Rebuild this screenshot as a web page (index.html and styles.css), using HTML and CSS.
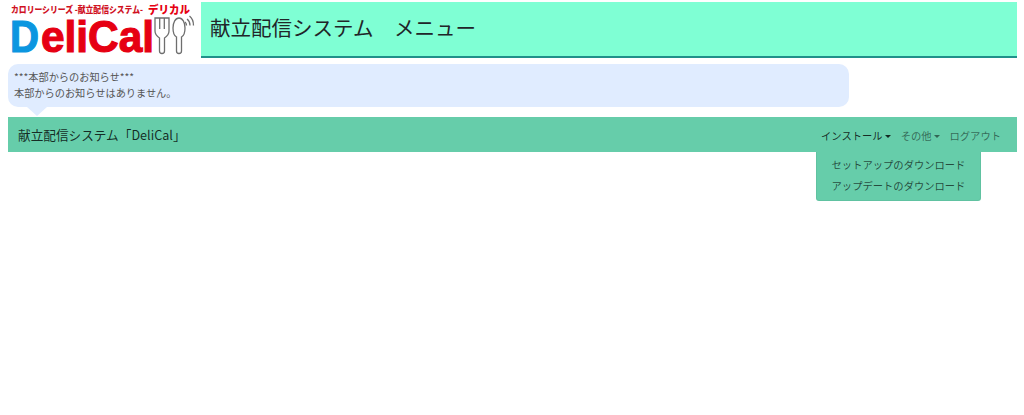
FILE: index.html
```html
<!DOCTYPE html>
<html lang="ja">

<head>
    <meta charset="UTF-8">
    <meta name="viewport" content="width=device-width, initial-scale=1.0">
    <title>献立配信システム</title>
    <link rel="stylesheet" href="styles.css">
</head>

<body>
    <!-- header -->
    <div class="header">
        <div class="logo">
            <svg width="193" height="54" viewBox="0 0 193 54">
                <text class="logo_sub" x="3" y="10" textLength="132" lengthAdjust="spacingAndGlyphs">カロリーシリーズ -献立配信システム-</text>
                <text class="logo_kana" x="140" y="11" textLength="42" lengthAdjust="spacingAndGlyphs">デリカル</text>
                <text class="logo_d" x="2" y="49" textLength="29" lengthAdjust="spacingAndGlyphs">D</text>
                <text class="logo_name" x="33" y="49" textLength="113" lengthAdjust="spacingAndGlyphs">eliCal</text>
                <!-- fork -->
                <path class="logo_line" d="M147 15v13c0 4 3 6 4.500 7v13a2.500 2.500 0 0 0 5 0V35c1.500-1 4.500-3 4.500-7V15z" />
                <path class="logo_wave" d="M151.700 15v11M156.300 15v11" />
                <!-- spoon -->
                <path class="logo_line" d="M171 15c-3.500 0-6 4.500-6 10 0 4 1.500 8 3.500 9v14a2.500 2.500 0 0 0 5 0V34c2-1 3.500-5 3.500-9 0-5.500-2.500-10-6-10z" />
                <!-- signal -->
                <path class="logo_wave" d="M177 19c1 .8 1.500 2 1.500 3.500M179 16c2 1.500 3 4 3 6.500M181.500 13c2.500 2 4 5.500 4 9.500" />
            </svg>
        </div>
        <h1 class="title">献立配信システム　メニュー</h1>
    </div>

    <!-- notice -->
    <div class="notice">
        <p>***本部からのお知らせ***</p>
        <p>本部からのお知らせはありません。</p>
    </div>

    <!-- nav -->
    <nav class="navbar">
        <a class="brand" href="#">献立配信システム「DeliCal」</a>
        <ul class="nav_list">
            <li class="nav_item"><a class="nav_link active caret" href="#">インストール</a></li>
            <li class="nav_item"><a class="nav_link caret" href="#">その他</a></li>
            <li class="nav_item"><a class="nav_link" href="#">ログアウト</a></li>
        </ul>
    </nav>
    <div class="sub_menu">
        <a href="#">セットアップのダウンロード</a>
        <a href="#">アップデートのダウンロード</a>
    </div>
</body>

</html>
```

FILE: styles.css
```css
* {
    box-sizing: border-box;
}

body {
    margin: 0;
    padding: 2px 7px 0 8px;
    background: #fff;
    font-family: "Noto Sans CJK JP", "Noto Sans", sans-serif;
    font-size: 12px;
    color: #212529;
}

.header {
    display: flex;
    height: 56px;
}

.logo {
    width: 193px;
    flex-shrink: 0;
    padding-top: 1px;
}

.logo svg {
    display: block;
}

.logo_sub,
.logo_kana {
    font-family: "Noto Sans CJK JP", sans-serif;
    font-weight: 900;
}

.logo_sub {
    font-size: 9px;
    fill: #d0121f;
}

.logo_kana {
    font-size: 11px;
    fill: #e60012;
}

.logo_d,
.logo_name {
    font-family: "Liberation Sans", sans-serif;
    font-weight: bold;
    font-size: 44px;
    stroke-width: 1.2;
}

.logo_d {
    fill: #0b96e0;
    stroke: #0b96e0;
}

.logo_name {
    fill: #e60012;
    stroke: #e60012;
}

.logo_line {
    fill: #fff;
    stroke: #6e6e6e;
    stroke-width: 1.3;
}

.logo_wave {
    fill: none;
    stroke: #6e6e6e;
    stroke-width: 1.3;
}

.title {
    flex: 1;
    margin: 0;
    padding: 0 0 4px 9px;
    display: flex;
    align-items: center;
    background: #7fffd4;
    border-bottom: 2px solid #20908a;
    font-size: 20.5px;
    font-weight: 400;
    color: #212529;
}

.notice {
    position: relative;
    width: 841px;
    height: 43px;
    margin-top: 6px;
    padding: 5px 6px;
    background: #e0ecff;
    border-radius: 10px;
    font-size: 10.2px;
    line-height: 15.5px;
    color: #555;
}

.notice p {
    margin: 0;
}

/* little tail under the bubble */
.notice::after {
    content: "";
    position: absolute;
    left: 19px;
    top: 100%;
    border-left: 10px solid transparent;
    border-right: 10px solid transparent;
    border-top: 9px solid #e0ecff;
}

.navbar {
    display: flex;
    justify-content: space-between;
    align-items: center;
    height: 35px;
    margin-top: 10px;
    padding: 0 16px 0 10px;
    background: #66cdaa;
}

.brand {
    font-size: 12.65px;
    color: rgba(0, 0, 0, .8);
    text-decoration: none;
}

.nav_list {
    display: flex;
    gap: 10px;
    margin: 0;
    padding: 0;
    list-style: none;
}

.nav_link {
    font-size: 10.3px;
    color: rgba(0, 0, 0, .5);
    text-decoration: none;
}

.nav_link.active {
    color: rgba(0, 0, 0, .8);
}

.caret::after {
    content: "";
    display: inline-block;
    margin-left: 2px;
    vertical-align: 2px;
    border-top: 3px solid;
    border-left: 3px solid transparent;
    border-right: 3px solid transparent;
}

/* open menu under インストール */
.sub_menu {
    width: 165px;
    height: 49px;
    margin-left: 808px;
    padding: 2px 0;
    background: #66cdaa;
    border: 1px solid rgba(0, 0, 0, .05);
    border-top: 0;
    border-radius: 0 0 3px 3px;
}

.sub_menu a {
    display: block;
    height: 21px;
    line-height: 21px;
    text-align: center;
    font-size: 10.3px;
    color: rgba(0, 0, 0, .65);
    text-decoration: none;
}
```
